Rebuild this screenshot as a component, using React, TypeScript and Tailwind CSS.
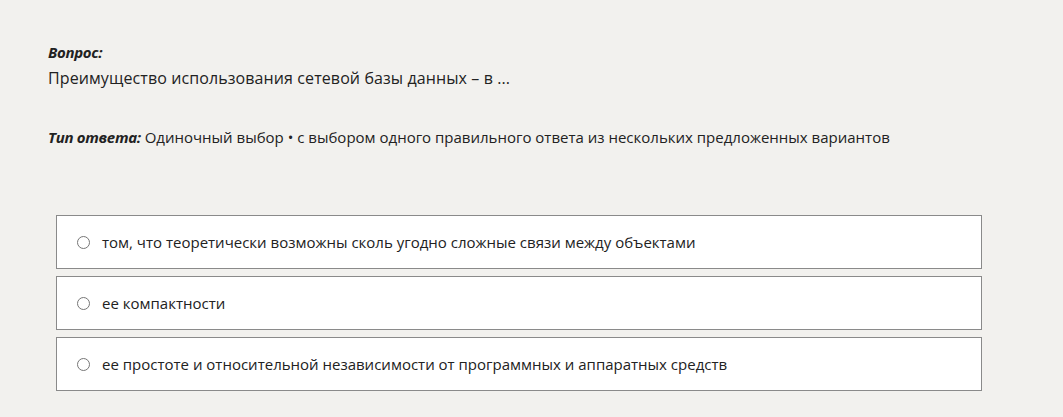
const options = [
  "том, что теоретически возможны сколь угодно сложные связи между объектами",
  "ее компактности",
  "ее простоте и относительной независимости от программных и аппаратных средств",
];

export default function App() {
  return (
    <div
      className="min-h-[417px] w-full bg-[#f2f1ee] text-[#222222] pt-[42px] pl-[48px]"
      style={{ fontFamily: '"Open Sans", "Noto Sans", sans-serif' }}
    >
      {/* Question */}
      <div className="text-[15px] leading-[20px] font-bold italic tracking-[-0.3px]">Вопрос:</div>
      <div className="mt-[5px] text-[16px] leading-[22px] tracking-[0.1px]">
        Преимущество использования сетевой базы данных – в ...
      </div>

      {/* Answer type */}
      <div className="mt-[38px] text-[15px] leading-[20px]">
        <span className="font-bold italic tracking-[-0.3px]">Тип ответа:</span>{" "}
        Одиночный выбор • с выбором одного правильного ответа из нескольких предложенных вариантов
      </div>

      {/* Options */}
      <div className="mt-[68px] ml-[8px] w-[926px] flex flex-col gap-[7px]">
        {options.map((text) => (
          <label
            key={text}
            className="h-[54px] bg-white border border-[#8a8a8a] flex items-center pl-[20px] gap-[12px] text-[15px] cursor-pointer"
          >
            <span className="w-[13px] h-[13px] rounded-full border border-[#767676] bg-white shrink-0" />
            <span>{text}</span>
          </label>
        ))}
      </div>
    </div>
  );
}
